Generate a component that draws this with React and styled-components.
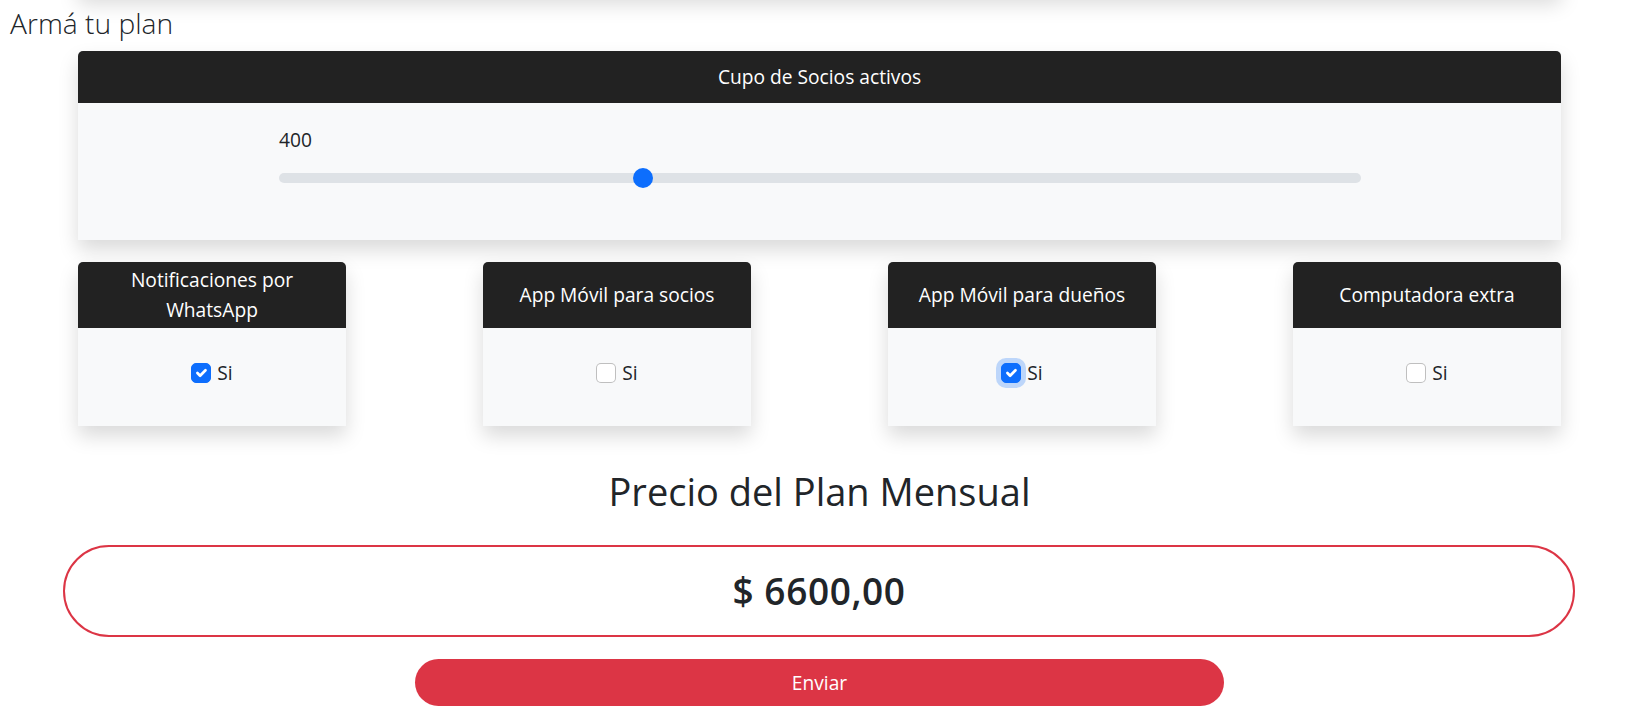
import React, { useState } from 'react'
import styled, { createGlobalStyle } from 'styled-components'

const GlobalStyle = createGlobalStyle`
  * { box-sizing: border-box; }
  html, body { margin: 0; padding: 0; background: #fff; }
  body {
    font-family: "Open Sans", "Liberation Sans", sans-serif;
    font-size: 19.2px;
    line-height: 30px;
    color: #212529;
  }
`

const Page = styled.main`
  padding-bottom: 16px;
`

// bottom edge of the card above, scrolled out of view
const PrevCard = styled.div`
  height: 40px;
  margin: -46px 91px 0 78px;
  background: #f8f9fa;
  box-shadow: 0 10px 20px rgba(0, 0, 0, 0.15);
`

const Title = styled.h4`
  margin: 11px 0 10px 10px;
  font-family: "Open Sans Light", "Open Sans", sans-serif;
  font-size: 28.2px;
  line-height: 36px;
  font-weight: 300;
`

const Card = styled.section`
  background: #f8f9fa;
  border-radius: 5px 5px 0 0;
  box-shadow: 0 10px 20px rgba(0, 0, 0, 0.15);
`

const PlanCard = styled(Card)`
  margin: 0 91px 0 78px;
`

const CardHeader = styled.header`
  display: flex;
  align-items: center;
  justify-content: center;
  height: ${p => (p.$tall ? '66px' : '52px')};
  padding: 0 20px;
  background: #222;
  color: #fff;
  text-align: center;
  border-radius: 5px 5px 0 0;
`

const SliderBody = styled.div`
  display: flex;
  flex-direction: column;
  gap: 8px;
  padding: 22px 200px 47px 201px;
`

const Range = styled.input`
  -webkit-appearance: none;
  appearance: none;
  width: 100%;
  height: 30px;
  margin: 0;
  padding: 0;
  background: transparent;

  &::-webkit-slider-runnable-track {
    height: 10px;
    border-radius: 10px;
    background: #dee2e6;
  }
  &::-webkit-slider-thumb {
    -webkit-appearance: none;
    width: 20px;
    height: 20px;
    margin-top: -5px;
    border: 0;
    border-radius: 50%;
    background: #0d6efd;
  }
`

const Options = styled.div`
  display: flex;
  justify-content: space-between;
  margin: 22px 91px 0 78px;
`

const OptionCard = styled(Card)`
  width: 268px;
`

const OptionBody = styled.div`
  display: flex;
  justify-content: center;
  padding: 30px 0 38px;
`

const CheckLabel = styled.label`
  display: inline-flex;
  align-items: center;
  gap: 6px;
  cursor: pointer;

  input {
    position: absolute;
    opacity: 0;
    pointer-events: none;
  }
`

const Box = styled.span`
  display: inline-flex;
  width: 20px;
  height: 20px;
  border-radius: 5px;
  border: 1px solid ${p => (p.$checked ? '#0d6efd' : 'rgba(0, 0, 0, 0.25)')};
  background: ${p => (p.$checked ? '#0d6efd' : '#fff')};
  box-shadow: ${p => (p.$focused ? '0 0 0 5px rgba(13, 110, 253, 0.25)' : 'none')};

  svg { width: 100%; height: 100%; }
`

const PriceTitle = styled.h2`
  margin: 40px 91px 0 78px;
  font-size: 38px;
  line-height: 50px;
  font-weight: 400;
  text-align: center;
`

const PriceBox = styled.div`
  display: flex;
  align-items: center;
  justify-content: center;
  height: 92px;
  margin: 29px 77px 0 63px;
  border: 2px solid #dc3545;
  border-radius: 999px;
  font-size: 37px;
  letter-spacing: 0.6px;
  font-weight: 600;
`

const ButtonRow = styled.div`
  margin-top: 22px;
  padding: 0 428px 0 415px;
`

const SendButton = styled.button`
  display: block;
  width: 100%;
  height: 47px;
  padding: 0;
  border: 0;
  border-radius: 999px;
  background: #dc3545;
  color: #fff;
  font: inherit;
  text-align: center;
  cursor: pointer;
`

function Check({ checked, focused, onChange }) {
  return (
    <CheckLabel>
      <input type="checkbox" checked={checked} onChange={onChange} />
      <Box $checked={checked} $focused={focused}>
        {checked && (
          <svg viewBox="0 0 20 20">
            <path d="m6 10 3 3 6-6" fill="none" stroke="#fff" strokeWidth="3" strokeLinecap="round" strokeLinejoin="round" />
          </svg>
        )}
      </Box>
      Si
    </CheckLabel>
  )
}

const extras = [
  { key: 'whatsapp', label: 'Notificaciones por WhatsApp' },
  { key: 'appSocios', label: 'App Móvil para socios' },
  { key: 'appDuenos', label: 'App Móvil para dueños' },
  { key: 'pc', label: 'Computadora extra' },
]

export default function App() {
  const [socios, setSocios] = useState(400)
  const [picked, setPicked] = useState({ whatsapp: true, appSocios: false, appDuenos: true, pc: false })

  return (
    <Page>
      <GlobalStyle />
      <PrevCard />
      <Title>Armá tu plan</Title>

      <PlanCard>
        <CardHeader>Cupo de Socios activos</CardHeader>
        <SliderBody>
          <span>{socios}</span>
          <Range type="range" min={0} max={1200} step={100} value={socios}
            onChange={e => setSocios(Number(e.target.value))} />
        </SliderBody>
      </PlanCard>

      <Options>
        {extras.map(x => (
          <OptionCard key={x.key}>
            <CardHeader $tall>{x.label}</CardHeader>
            <OptionBody>
              <Check checked={picked[x.key]} focused={x.key === 'appDuenos'}
                onChange={() => setPicked(p => ({ ...p, [x.key]: !p[x.key] }))} />
            </OptionBody>
          </OptionCard>
        ))}
      </Options>

      <PriceTitle>Precio del Plan Mensual</PriceTitle>
      <PriceBox>$ 6600,00</PriceBox>
      <ButtonRow>
        <SendButton type="button">Enviar</SendButton>
      </ButtonRow>
    </Page>
  )
}
